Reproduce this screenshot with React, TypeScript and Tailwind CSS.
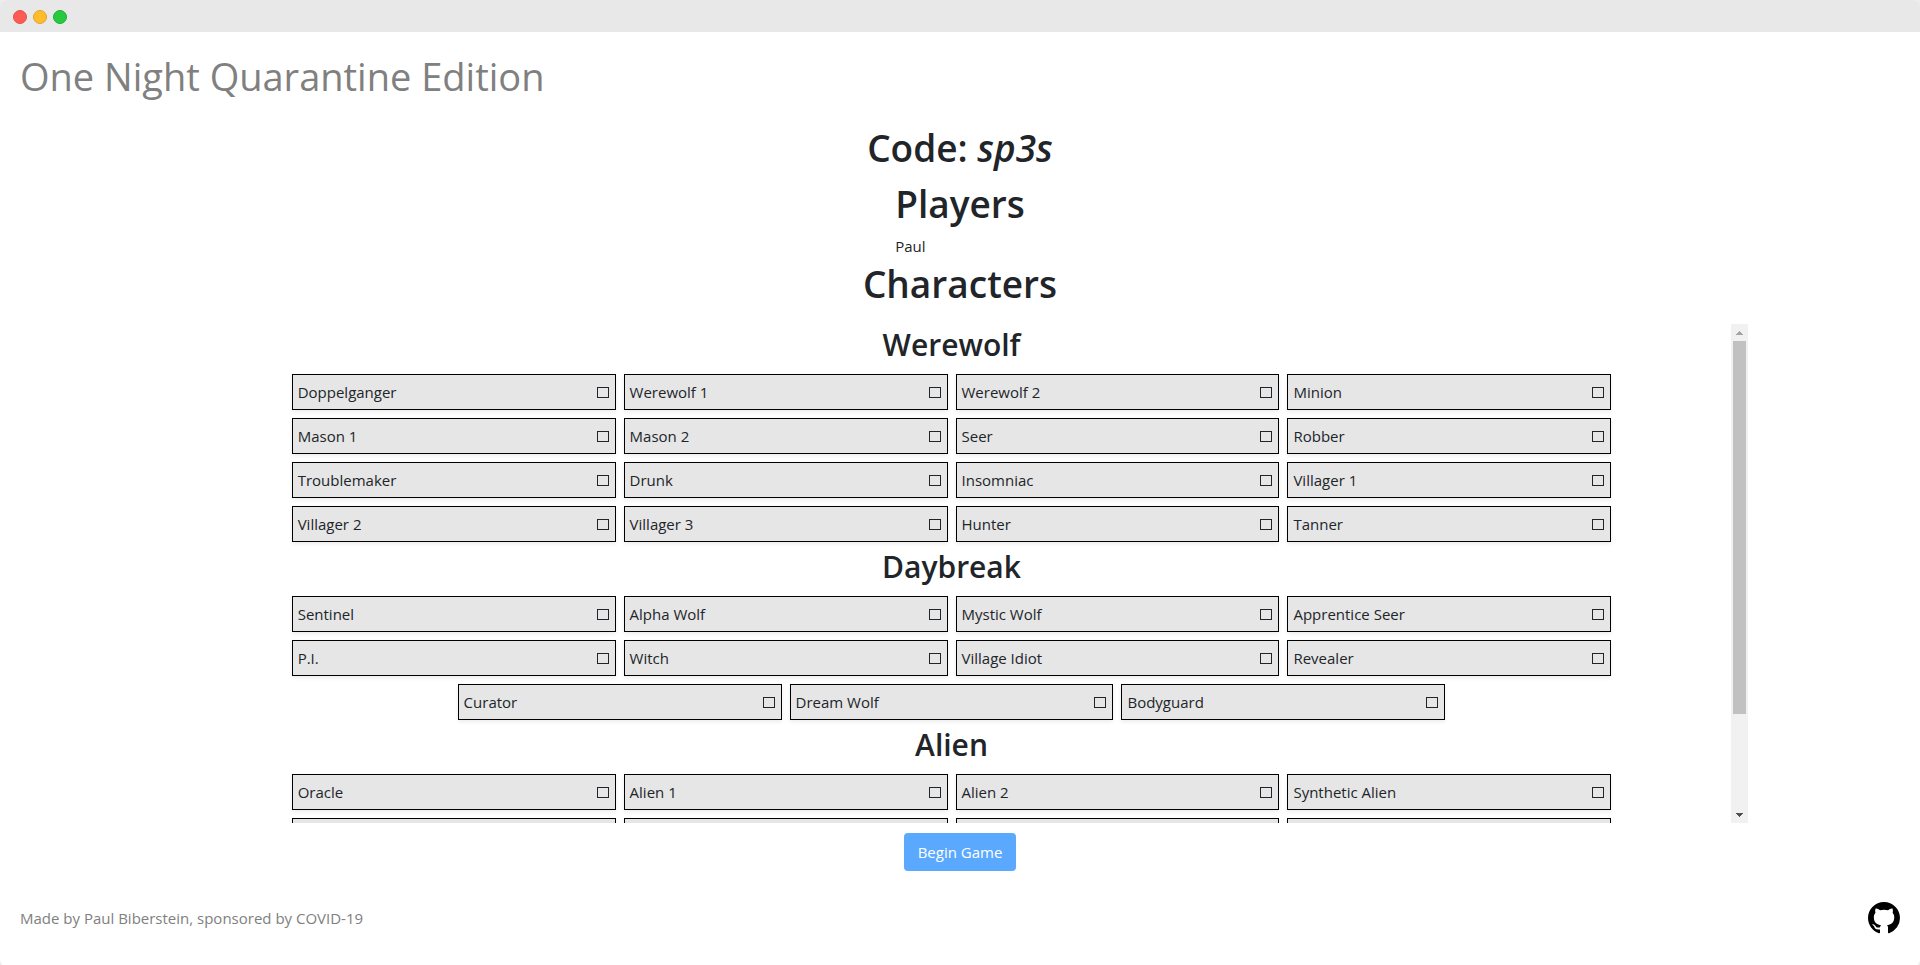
import { useCallback, useEffect, useRef, useState } from "react";

const GROUPS: { name: string; roles: string[] }[] = [
  {
    name: "Werewolf",
    roles: [
      "Doppelganger", "Werewolf 1", "Werewolf 2", "Minion",
      "Mason 1", "Mason 2", "Seer", "Robber",
      "Troublemaker", "Drunk", "Insomniac", "Villager 1",
      "Villager 2", "Villager 3", "Hunter", "Tanner",
    ],
  },
  {
    name: "Daybreak",
    roles: [
      "Sentinel", "Alpha Wolf", "Mystic Wolf", "Apprentice Seer",
      "P.I.", "Witch", "Village Idiot", "Revealer",
      "Curator", "Dream Wolf", "Bodyguard",
    ],
  },
  {
    name: "Alien",
    roles: [
      "Oracle", "Alien 1", "Alien 2", "Synthetic Alien",
      "Cow", "Groob", "Zerb", "Leader",
      "Psychic", "Rascal", "Exposer", "Blob",
      "Mortician",
    ],
  },
];

function RoleCard({ role }: { role: string }) {
  return (
    <label className="flex h-9 w-[calc((100%-24px)/4)] items-center justify-between border border-black bg-[#e6e6e6] pr-1.5 pl-[5px] shadow-[0_2px_4px_rgba(0,0,0,0.075)]">
      <span>{role}</span>
      <input
        type="checkbox"
        name={role}
        className="h-[11px] w-3 appearance-none border border-[#212529] checked:bg-[#212529]"
      />
    </label>
  );
}

function RoleGroup({ name, roles }: { name: string; roles: string[] }) {
  return (
    <section className="pb-1">
      <h2 className="mb-2 text-center text-[30px] leading-[42px] font-semibold">{name}</h2>
      <div className="flex flex-wrap justify-center gap-2">
        {roles.map((role) => (
          <RoleCard key={role} role={role} />
        ))}
      </div>
    </section>
  );
}

function RoleList() {
  const list = useRef<HTMLDivElement>(null);
  const [thumb, setThumb] = useState({ size: 0, top: 0 });

  const measure = useCallback(() => {
    const el = list.current;
    if (!el) return;
    setThumb({
      size: (el.clientHeight / el.scrollHeight) * 100,
      top: (el.scrollTop / el.scrollHeight) * 100,
    });
  }, []);

  useEffect(() => {
    measure();
    window.addEventListener("resize", measure);
    return () => window.removeEventListener("resize", measure);
  }, [measure]);

  const step = (by: number) => list.current?.scrollBy({ top: by });

  return (
    <div className="mt-2 flex h-[499px] w-[82.1%]">
      <div
        ref={list}
        onScroll={measure}
        className="min-w-0 flex-1 overflow-y-scroll px-[7.6%] [scrollbar-width:none]"
      >
        {GROUPS.map((group) => (
          <RoleGroup key={group.name} name={group.name} roles={group.roles} />
        ))}
      </div>
      <div className="flex w-[17px] shrink-0 flex-col bg-[#f1f1f1]">
        <button
          type="button"
          aria-label="Scroll up"
          onClick={() => step(-44)}
          className="flex h-[17px] items-center justify-center text-[#a3a3a3]"
        >
          <svg width="7" height="4" viewBox="0 0 7 4" fill="currentColor" shapeRendering="crispEdges">
            <path d="M3 0h1v1h1v1h1v1h1v1H0V3h1V2h1V1h1z" />
          </svg>
        </button>
        <div className="min-h-0 flex-1 px-0.5">
          <div className="relative h-full">
            <div
              className="absolute inset-x-0 bg-[#c1c1c1]"
              style={{ height: `${thumb.size}%`, top: `${thumb.top}%` }}
            />
          </div>
        </div>
        <button
          type="button"
          aria-label="Scroll down"
          onClick={() => step(44)}
          className="flex h-[17px] items-center justify-center text-[#505050]"
        >
          <svg width="7" height="4" viewBox="0 0 7 4" fill="currentColor" shapeRendering="crispEdges">
            <path d="M0 0h7v1H6v1H5v1H4v1H3V3H2V2H1V1H0z" />
          </svg>
        </button>
      </div>
    </div>
  );
}

function GitHubMark() {
  return (
    <svg width="32" height="32" viewBox="0 0 16 16" fill="currentColor" aria-hidden="true">
      <path d="M8 0C3.58 0 0 3.58 0 8c0 3.54 2.29 6.53 5.47 7.59.4.07.55-.17.55-.38 0-.19-.01-.82-.01-1.49-2.01.37-2.53-.49-2.69-.94-.09-.23-.48-.94-.82-1.13-.28-.15-.68-.52-.01-.53.63-.01 1.08.58 1.23.82.72 1.21 1.87.87 2.33.66.07-.52.28-.87.51-1.07-1.78-.2-3.64-.89-3.64-3.95 0-.87.31-1.59.82-2.15-.08-.2-.36-1.02.08-2.12 0 0 .67-.21 2.2.82.64-.18 1.32-.27 2-.27s1.36.09 2 .27c1.53-1.04 2.2-.82 2.2-.82.44 1.1.16 1.92.08 2.12.51.56.82 1.27.82 2.15 0 3.07-1.87 3.75-3.65 3.95.29.25.54.73.54 1.48 0 1.07-.01 1.93-.01 2.2 0 .21.15.46.55.38A8.01 8.01 0 0 0 16 8c0-4.42-3.58-8-8-8z" />
    </svg>
  );
}

export default function App() {
  return (
    <div className="min-h-screen bg-[#ececec]">
      <div className="flex min-h-screen flex-col overflow-hidden rounded-md bg-white font-['Open_Sans','Noto_Sans',sans-serif] text-[15px] leading-6 text-[#212529]">
        <div className="flex h-8 items-center gap-1.5 bg-[#e8e8e8] px-[13px] pt-0.5">
          <span className="size-3.5 rounded-full border border-[#e2524b] bg-[#ff5a54]" />
          <span className="size-3.5 rounded-full border border-[#e0a32e] bg-[#ffbd2e]" />
          <span className="size-3.5 rounded-full border border-[#1eae35] bg-[#27c93f]" />
        </div>

        <header className="px-5 pt-5 pb-6">
          <h1 className="text-[38px] leading-[48px] text-[#808080]">One Night Quarantine Edition</h1>
        </header>

        <main className="flex flex-col items-center">
          <h1 className="mb-2 text-[37px] leading-[48px] font-semibold">
            Code: <em>sp3s</em>
          </h1>
          <div className="mb-1">
            <h1 className="mb-2 text-[37px] leading-[48px] font-semibold">Players</h1>
            <ul className="leading-5">
              <li>Paul</li>
            </ul>
          </div>
          <h1 className="mb-2 text-[37px] leading-[48px] font-semibold">Characters</h1>
          <RoleList />
          <button
            type="button"
            className="mt-2.5 h-[38px] rounded bg-[#5aa9ff] px-3.5 font-medium text-white"
          >
            Begin Game
          </button>
        </main>

        <footer className="flex items-center justify-between px-5 pt-[31px] pb-8 text-[#808080]">
          <p>Made by Paul Biberstein, sponsored by COVID-19</p>
          <a href="https://github.com" aria-label="GitHub" className="text-black">
            <GitHubMark />
          </a>
        </footer>
      </div>
    </div>
  );
}
